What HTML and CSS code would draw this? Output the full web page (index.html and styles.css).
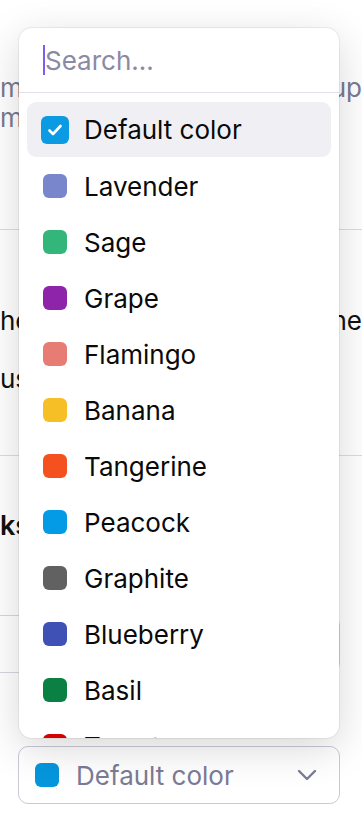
FILE: index.html
```html
<!DOCTYPE html>
<html lang="en">
<head>
    <meta charset="UTF-8">
    <title>Event color</title>
    <link rel="stylesheet" href="styles.css">
</head>
<body>
    <div class="page">
        <div class="desc-row">
            <span>m</span>
            <span>up</span>
        </div>
        <div class="desc-row">
            <span>m</span>
        </div>

        <div class="section-line first-line"></div>

        <div class="text-row">
            <span>he</span>
            <span>he</span>
        </div>
        <div class="text-row">
            <span>us</span>
        </div>

        <div class="section-line second-line"></div>

        <div class="heading-row">ks</div>

        <div class="field-box"></div>

        <!-- Fargevelger -->
        <button class="color-trigger">
            <span class="swatch trigger-swatch"></span>
            <span class="trigger-label">Default color</span>
            <svg class="chevron" width="24" height="24" viewBox="0 0 24 24" fill="none">
                <path d="M4 8l8 8 8-8" stroke="#7b7b96" stroke-width="2.4" stroke-linecap="round" stroke-linejoin="round"/>
            </svg>
        </button>
    </div>

    <div class="popup">
        <div class="search-box">
            <span class="caret"></span>
            <span class="search-placeholder">Search...</span>
        </div>
        <ul class="color-list">
            <li class="color-item selected">
                <span class="checkbox">
                    <svg width="18" height="18" viewBox="0 0 18 18" fill="none">
                        <path d="M3.5 9.5l3.5 3.5 7.5-8" stroke="#fff" stroke-width="2.6" stroke-linecap="round" stroke-linejoin="round"/>
                    </svg>
                </span>
                Default color
            </li>
            <li class="color-item"><span class="swatch lavender"></span>Lavender</li>
            <li class="color-item"><span class="swatch sage"></span>Sage</li>
            <li class="color-item"><span class="swatch grape"></span>Grape</li>
            <li class="color-item"><span class="swatch flamingo"></span>Flamingo</li>
            <li class="color-item"><span class="swatch banana"></span>Banana</li>
            <li class="color-item"><span class="swatch tangerine"></span>Tangerine</li>
            <li class="color-item"><span class="swatch peacock"></span>Peacock</li>
            <li class="color-item"><span class="swatch graphite"></span>Graphite</li>
            <li class="color-item"><span class="swatch blueberry"></span>Blueberry</li>
            <li class="color-item"><span class="swatch basil"></span>Basil</li>
            <li class="color-item"><span class="swatch tomato"></span>Tomato</li>
        </ul>
    </div>
</body>
</html>
```

FILE: styles.css
```css
body {
    margin: 0;
    font-family: Inter, "Noto Sans", sans-serif;
    background: #fff;
    overflow: hidden;
}
.page {
    display: flex;
    flex-direction: column;
    height: 818px;
}
.desc-row {
    display: flex;
    justify-content: space-between;
    font-size: 26px;
    line-height: 30px;
    color: #7a7a92;
}
.desc-row:first-child {
    margin-top: 73px;
}
.section-line {
    border-top: 1px solid #dcdce4;
}
.first-line {
    margin-top: 96px;
}
.text-row {
    display: flex;
    justify-content: space-between;
    font-size: 26px;
    line-height: 30px;
    color: #111;
}
.first-line + .text-row {
    margin-top: 76px;
}
.text-row + .text-row {
    margin-top: 28px;
}
.second-line {
    margin-top: 61px;
}
.heading-row {
    margin-top: 55px;
    font-size: 27px;
    font-weight: 600;
    line-height: 30px;
    color: #111;
}
.field-box {
    margin-top: 74px;
    margin-right: 22px;
    height: 56px;
    border: 1px solid #d6d6e0;
    border-left: none;
    border-radius: 0 10px 10px 0;
}
.color-trigger {
    margin: 73px 22px 0 18px;
    height: 58px;
    display: flex;
    align-items: center;
    padding: 0 20px 0 16px;
    background: #fff;
    border: 1.5px solid #c9c9d8;
    border-radius: 10px;
    font-family: inherit;
    cursor: pointer;
}
.trigger-label {
    flex: 1;
    text-align: left;
    font-size: 26px;
    color: #7b7b96;
    margin-left: 17px;
}
.chevron {
    display: block;
}

/* Popup */
.popup {
    position: absolute;
    top: 28px;
    left: 19px;
    width: 320px;
    height: 710px;
    background: #fff;
    border-radius: 13px;
    box-shadow: 0 0 0 1px rgba(0, 0, 0, 0.06), 0 10px 40px rgba(0, 0, 0, 0.16);
    overflow: hidden;
}
.search-box {
    height: 64px;
    display: flex;
    align-items: center;
    padding-left: 24px;
    border-bottom: 1.5px solid #e2e2ea;
}
.caret {
    width: 2px;
    height: 30px;
    background: #7c5cf5;
}
.search-placeholder {
    font-size: 26px;
    color: #8a8aa4;
}
.color-list {
    list-style: none;
    margin: 0;
    padding: 9px 8px;
}
.color-item {
    height: 56px;
    display: flex;
    align-items: center;
    padding-left: 16px;
    font-size: 26px;
    color: #0a0a0a;
    border-radius: 9px;
}
.color-item.selected {
    height: 55px;
    margin-bottom: 1px;
    background: #f0f0f4;
}
.swatch {
    width: 24px;
    height: 24px;
    border-radius: 6px;
    margin-right: 17px;
    flex-shrink: 0;
}
.checkbox {
    width: 28px;
    height: 28px;
    border-radius: 6px;
    background: #0c9be3;
    margin-left: -2px;
    margin-right: 15px;
    display: flex;
    align-items: center;
    justify-content: center;
}
.trigger-swatch { background: #0596dd; margin-right: 0; }
.lavender { background: #7986cb; }
.sage { background: #33b679; }
.grape { background: #8e24aa; }
.flamingo { background: #e67c73; }
.banana { background: #f6bf26; }
.tangerine { background: #f4511e; }
.peacock { background: #039be5; }
.graphite { background: #616161; }
.blueberry { background: #3f51b5; }
.basil { background: #0b8043; }
.tomato { background: #d50000; }
```
